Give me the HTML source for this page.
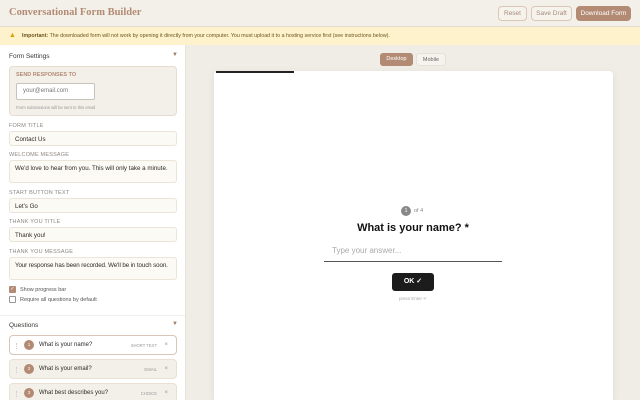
<!DOCTYPE html>
<html><head><style>
*{box-sizing:border-box;margin:0;padding:0}
html,body{width:640px;height:400px;overflow:hidden}
body{background:#f0ede6;font-family:"Liberation Sans",sans-serif;position:relative}
.hdr{position:absolute;left:0;top:0;width:640px;height:27px;background:#f3f0e9;border-bottom:1px solid #e3ddd2}
.title{position:absolute;left:9px;top:7px;font-family:"Liberation Serif",serif;font-weight:bold;font-size:10.5px;color:#b38b74}
.btn{position:absolute;top:6px;height:15px;border:1px solid #dcc6b8;border-radius:4px;font-size:6.5px;color:#a68a7b;text-align:center;line-height:14px;background:#f6f3ec}
.warn{position:absolute;left:0;top:27px;width:640px;height:18px;background:#fdf2cc;font-size:5.3px;color:#6f5520;line-height:18px;padding-left:22px;white-space:nowrap}
.side{position:absolute;left:0;top:45px;width:186px;height:355px;background:#fff;border-right:1px solid #e8e3da;overflow:hidden}
.lbl{position:absolute;left:9px;font-size:5.5px;color:#8d8781;letter-spacing:.2px}
.inp{position:absolute;left:9px;width:168px;height:15px;background:#fcfaf5;border:1px solid #ebe4d8;border-radius:3px;font-size:6.2px;color:#2e2a26;padding:4px 5px;white-space:nowrap}
.q{position:absolute;left:9px;width:168px;height:20px;background:#f3f0e9;border:1px solid #e8e1d4;border-radius:4px;font-size:6px;color:#2e2a26}
.q .n{position:absolute;left:14px;top:4px;width:10px;height:10px;border-radius:50%;background:#b38b74;color:#fff;font-size:4.5px;text-align:center;line-height:10px}
.q .t{position:absolute;left:29px;top:6px}
.q .ty{position:absolute;right:19px;top:7px;font-size:4.2px;color:#999}
.q .x{position:absolute;right:8px;top:5.5px;font-size:6px;line-height:7px;color:#999}
.q .d{position:absolute;left:6px;top:7px;width:2px;height:6px;border-left:1px dotted #ccc}
</style></head><body>
<div class="hdr"><div class="title">Conversational Form Builder</div>
<div class="btn" style="left:498px;width:29px">Reset</div>
<div class="btn" style="left:531px;width:41px">Save Draft</div>
<div class="btn" style="left:576px;width:55px;background:#b38b74;border-color:#b38b74;color:#fff">Download Form</div></div>
<div class="warn"><span style="position:absolute;left:9px;font-size:7px;color:#d9a000">▲</span><b>Important:</b> The downloaded form will not work by opening it directly from your computer. You must upload it to a hosting service first (see instructions below).</div>
<div class="side">
<div style="position:absolute;left:9px;top:8px;font-size:6.5px;color:#3a3632">Form Settings</div>
<div style="position:absolute;left:172px;top:7px;font-size:6px;color:#a07b66">▼</div>
<div style="position:absolute;left:9px;top:21px;width:168px;height:50px;background:#f3f0e9;border:1px solid #e6ddd0;border-radius:4px"></div>
<div style="position:absolute;left:16px;top:27px;font-size:5.5px;color:#b38b74;font-weight:bold">SEND RESPONSES TO</div>
<div style="position:absolute;left:16px;top:38px;width:79px;height:17px;background:#fff;border:1px solid #c7c2bb;border-radius:2px;font-size:6px;color:#777;padding:4px 6px">your@email.com</div>
<div style="position:absolute;left:16px;top:60px;font-size:4.2px;color:#999">Form submissions will be sent to this email</div>
<div class="lbl" style="top:78px">FORM TITLE</div>
<div class="inp" style="top:86px">Contact Us</div>
<div class="lbl" style="top:107px">WELCOME MESSAGE</div>
<div class="inp" style="top:115px;height:23px">We'd love to hear from you. This will only take a minute.</div>
<div class="lbl" style="top:145px">START BUTTON TEXT</div>
<div class="inp" style="top:153px">Let's Go</div>
<div class="lbl" style="top:174px">THANK YOU TITLE</div>
<div class="inp" style="top:182px">Thank you!</div>
<div class="lbl" style="top:204px">THANK YOU MESSAGE</div>
<div class="inp" style="top:212px;height:23px;letter-spacing:-.1px">Your response has been recorded. We'll be in touch soon.</div>
<div style="position:absolute;left:9px;top:241px;width:7px;height:7px;background:#b38b74;border-radius:1px;color:#fff;font-size:5px;line-height:7px;text-align:center">✓</div>
<div style="position:absolute;left:20px;top:242px;font-size:5.5px;color:#555">Show progress bar</div>
<div style="position:absolute;left:9px;top:251px;width:7px;height:7px;border:1px solid #999;border-radius:1px"></div>
<div style="position:absolute;left:20px;top:252px;font-size:5.5px;color:#555">Require all questions by default</div>
<div style="position:absolute;left:0;top:270px;width:186px;border-top:1px solid #eee"></div>
<div style="position:absolute;left:9px;top:277px;font-size:6.5px;color:#3a3632">Questions</div>
<div style="position:absolute;left:172px;top:276px;font-size:6px;color:#a07b66">▼</div>
<div class="q" style="top:290px;background:#fff;border-color:#d9c6b9"><span class="d"></span><span class="n">1</span><span class="t">What is your name?</span><span class="ty">SHORT TEXT</span><span class="x">×</span></div>
<div class="q" style="top:314px"><span class="d"></span><span class="n">2</span><span class="t">What is your email?</span><span class="ty">EMAIL</span><span class="x">×</span></div>
<div class="q" style="top:338px"><span class="d"></span><span class="n">3</span><span class="t">What best describes you?</span><span class="ty">CHOICE</span><span class="x">×</span></div>
</div>
<div style="position:absolute;left:380px;top:53px;width:33px;height:13px;background:#b38b74;border-radius:3px;color:#fff;font-size:5.5px;text-align:center;line-height:13px">Desktop</div>
<div style="position:absolute;left:416px;top:53px;width:30px;height:13px;background:#f5f3ee;border:1px solid #e5e0d8;border-radius:3px;color:#666;font-size:5.5px;text-align:center;line-height:12px">Mobile</div>
<div style="position:absolute;left:214px;top:71px;width:399px;height:329px;background:#fff;border-radius:4px 4px 0 0;box-shadow:0 2px 8px rgba(0,0,0,.08)"></div>
<div style="position:absolute;left:216px;top:71px;width:78px;height:2px;background:#222"></div>
<div style="position:absolute;left:401px;top:206px;width:10px;height:10px;border-radius:50%;background:#888;color:#fff;font-size:5.5px;text-align:center;line-height:10px">1</div>
<div style="position:absolute;left:414px;top:208px;font-size:5.5px;color:#888">of 4</div>
<div style="position:absolute;left:300px;top:222px;width:226px;text-align:center;font-size:11px;font-weight:bold;color:#111">What is your name? *</div>
<div style="position:absolute;left:324px;top:244px;width:178px;height:18px;border-bottom:1px solid #555;font-size:8px;color:#aaa;padding-left:8px;padding-top:2px">Type your answer...</div>
<div style="position:absolute;left:392px;top:273px;width:42px;height:18px;background:#1c1c1c;border-radius:3px;color:#fff;font-size:7px;font-weight:bold;text-align:center;line-height:18px">OK ✓</div>
<div style="position:absolute;left:380px;top:296px;width:66px;text-align:center;font-size:4.5px;color:#aaa">press Enter ↵</div>
</body></html>
